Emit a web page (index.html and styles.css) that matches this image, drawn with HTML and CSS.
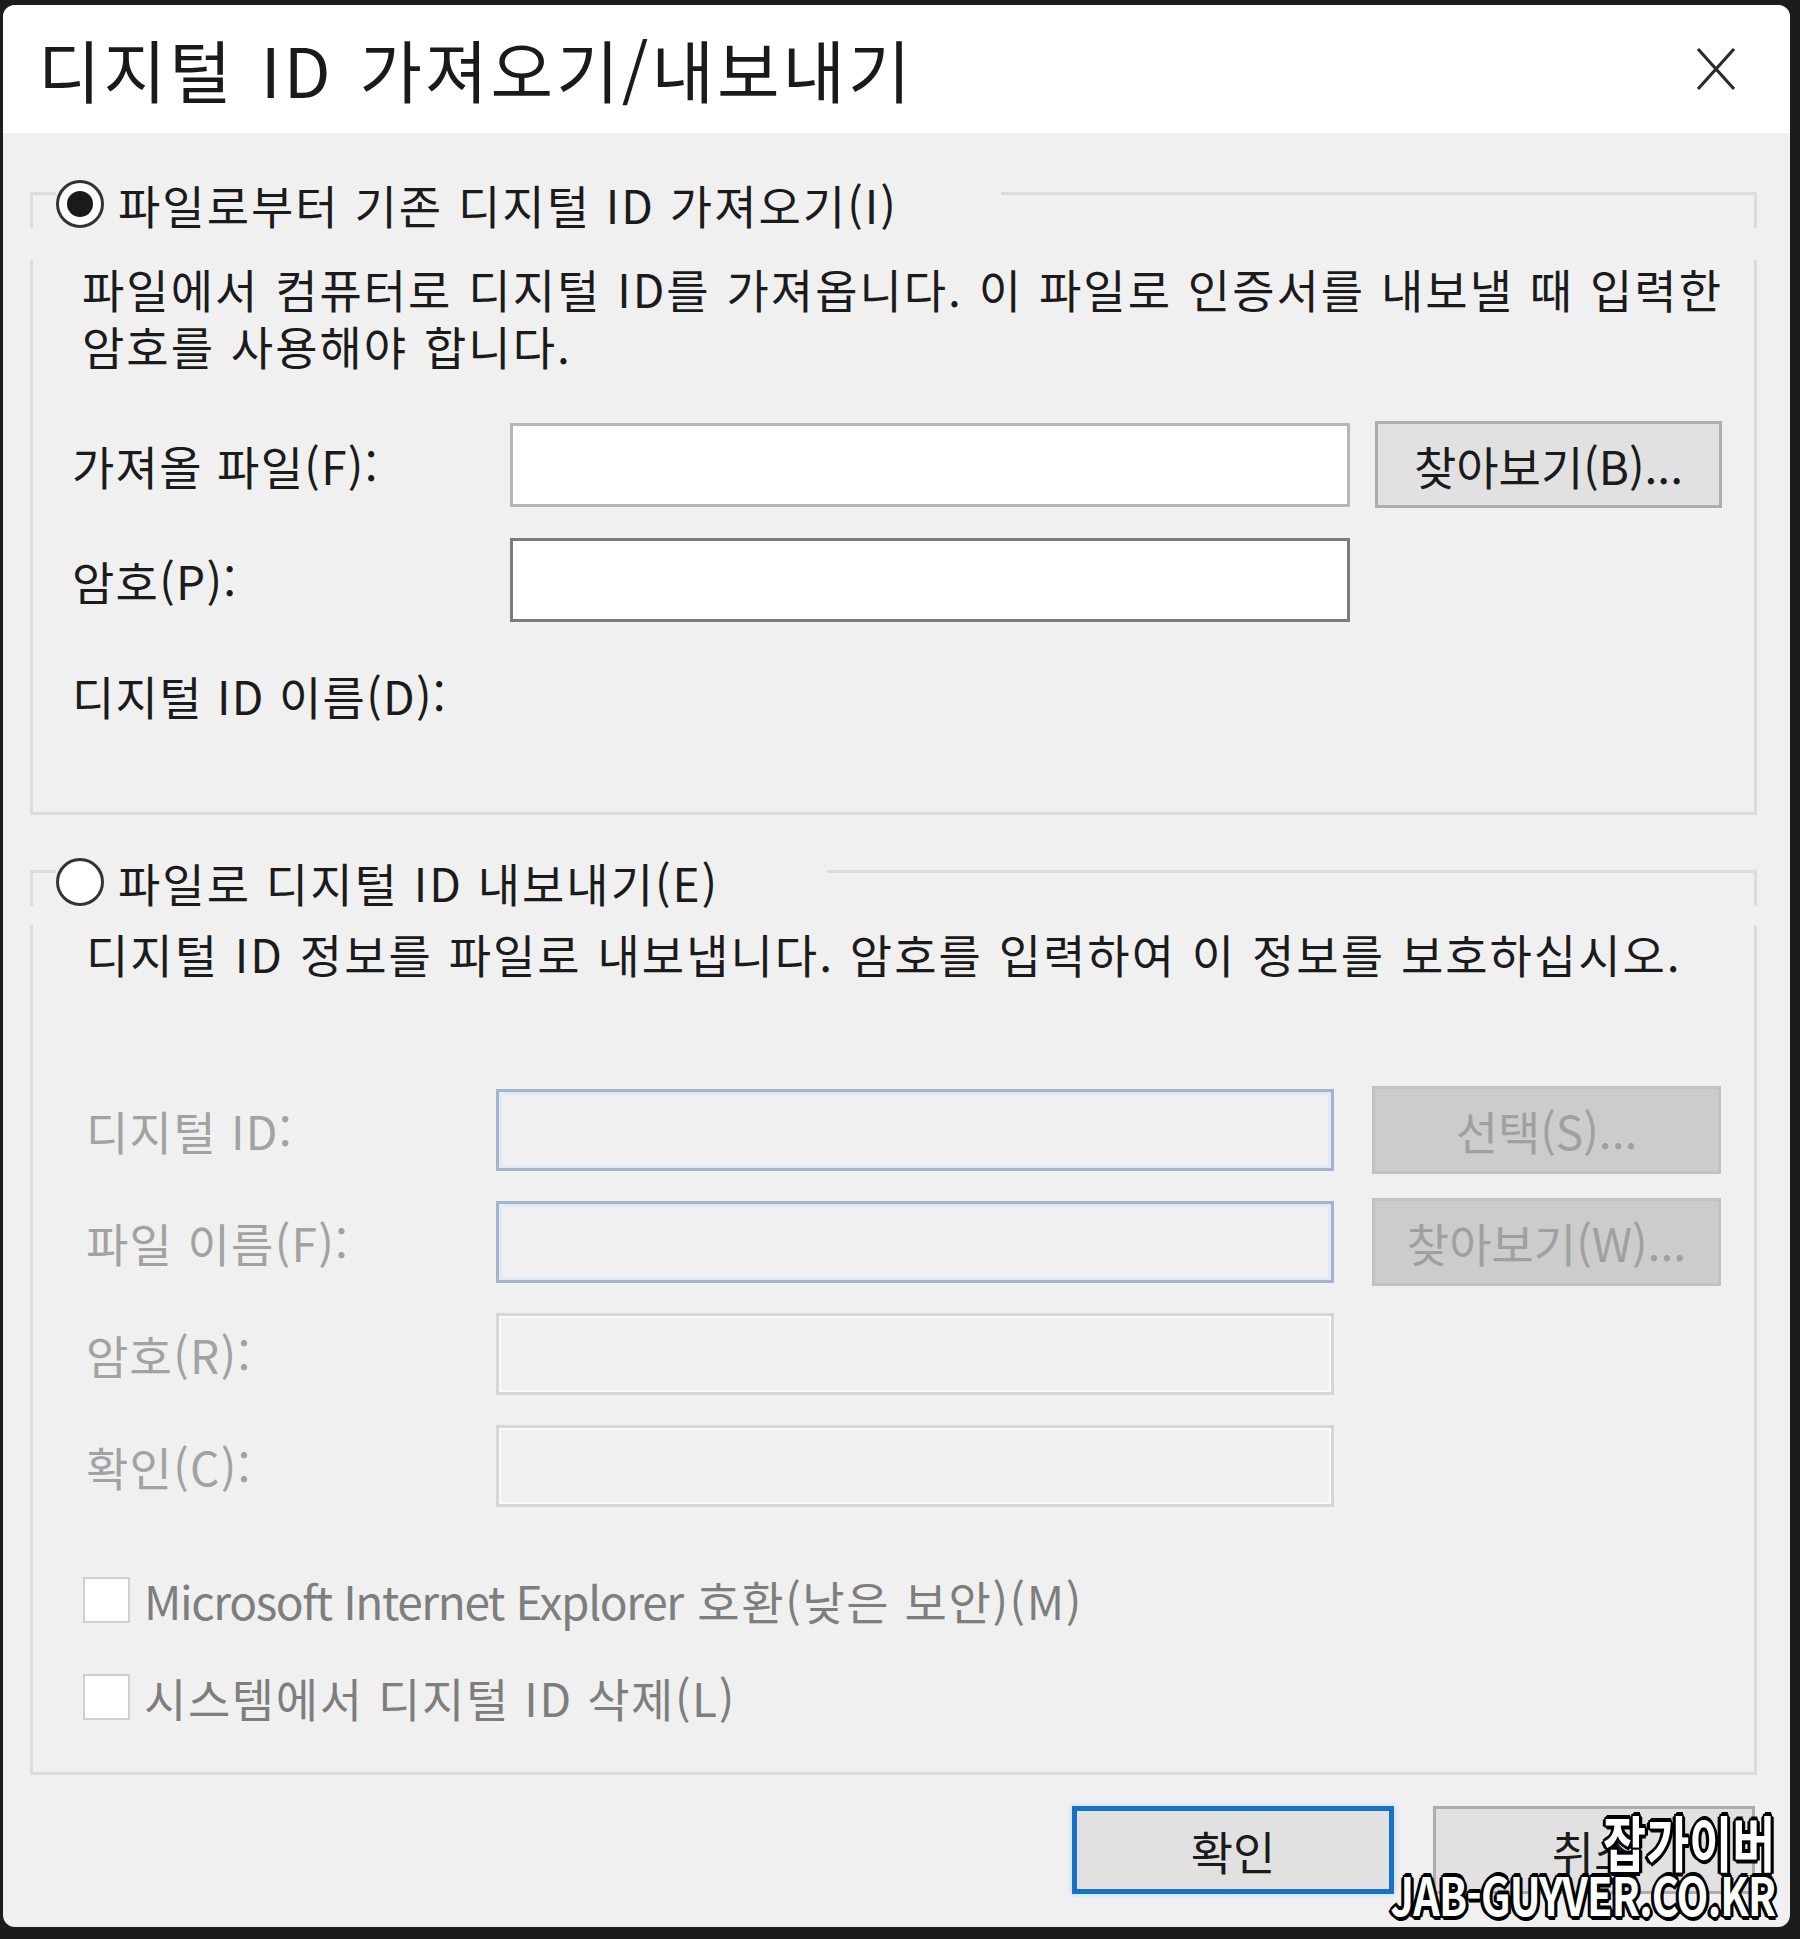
FILE: index.html
```html
<!DOCTYPE html>
<html lang="ko">
<head>
  <meta charset="UTF-8" />
  <meta name="viewport" content="width=device-width, initial-scale=1" />
  <title>디지털 ID 가져오기/내보내기</title>
  <link rel="stylesheet" href="styles.css">
</head>
<body>
  <div class="window">
    <div class="titlebar">
      <h1 class="title">디지털 ID 가져오기/내보내기</h1>
      <button class="close" type="button" aria-label="닫기">
        <svg width="40" height="44" viewBox="0 0 40 44">
          <path d="M2 2 L38 42 M38 2 L2 42" stroke="#2b2b2b" stroke-width="3.2" fill="none" />
        </svg>
      </button>
    </div>

    <div class="content">
      <!-- import group -->
      <section class="group">
        <div class="group-head">
          <span class="seg seg-left"></span>
          <label class="legend legend-import"><span class="radio checked"></span>파일로부터 기존 디지털 ID 가져오기(I)</label>
          <span class="seg seg-right"></span>
        </div>
        <div class="group-body body-import">
          <p class="desc desc-import">파일에서 컴퓨터로 디지털 ID를 가져옵니다. 이 파일로 인증서를 내보낼 때 입력한<br>암호를 사용해야 합니다.</p>
          <div class="form-grid grid-import">
            <span class="label">가져올 파일(F):</span>
            <input class="field" type="text" />
            <button class="btn" type="button">찾아보기(B)...</button>

            <span class="label">암호(P):</span>
            <input class="field field-hover" type="password" />

            <span class="label">디지털 ID 이름(D):</span>
          </div>
        </div>
      </section>

      <!-- export group -->
      <section class="group">
        <div class="group-head">
          <span class="seg seg-left"></span>
          <label class="legend legend-export"><span class="radio"></span>파일로 디지털 ID 내보내기(E)</label>
          <span class="seg seg-right"></span>
        </div>
        <div class="group-body body-export">
          <p class="desc desc-export">디지털 ID 정보를 파일로 내보냅니다. 암호를 입력하여 이 정보를 보호하십시오.</p>
          <div class="form-grid grid-export">
            <span class="label disabled">디지털 ID:</span>
            <input class="field field-off field-blue" type="text" disabled />
            <button class="btn btn-off" type="button" disabled>선택(S)...</button>

            <span class="label disabled">파일 이름(F):</span>
            <input class="field field-off field-blue" type="text" disabled />
            <button class="btn btn-off" type="button" disabled>찾아보기(W)...</button>

            <span class="label disabled">암호(R):</span>
            <input class="field field-off" type="password" disabled />

            <span class="label disabled">확인(C):</span>
            <input class="field field-off" type="password" disabled />
          </div>

          <div class="checks">
            <label class="check"><span class="box"></span><span><span class="latin">Microsoft Internet Explorer</span> 호환(낮은 보안)(M)</span></label>
            <label class="check"><span class="box"></span><span>시스템에서 디지털 ID 삭제(L)</span></label>
          </div>
        </div>
      </section>

      <div class="footer">
        <button class="btn btn-wide btn-default" type="button">확인</button>
        <button class="btn btn-wide" type="button">취소</button>
      </div>
    </div>

    <div class="watermark">
      <div class="wm-kr">잡가이버</div>
      <div class="wm-en">JAB-GUYVER.CO.KR</div>
    </div>
  </div>
</body>
</html>
```

FILE: styles.css
```css
html, body {
  height: 100%;
}
body {
  margin: 0;
  padding: 5px 10px 12px 3px;
  box-sizing: border-box;
  background: #1c1c1c;
  font-family: "Noto Sans CJK KR", "Noto Sans", sans-serif;
  color: #1b1b1b;
}
.window {
  position: relative;
  height: 100%;
  background: #f0f0f0;
  border-radius: 12px;
  overflow: hidden;
}
.titlebar {
  height: 128px;
  background: #fff;
  display: flex;
  align-items: center;
  justify-content: space-between;
  padding: 0 54px 0 35px;
}
.title {
  margin: 0;
  font-size: 68px;
  font-weight: 400;
  line-height: 1;
  letter-spacing: 3px;
  word-spacing: 4px;
  color: #1a1a1a;
}
.close {
  border: 0;
  background: none;
  padding: 0;
  display: flex;
}
.content {
  padding: 0 33px 0 27px;
}
.group {
  margin-top: 47px;
}
.group + .group {
  margin-top: 43px;
}
/* group box header: line, legend, line */
.group-head {
  display: flex;
  height: 48px;
}
.seg {
  margin-top: 12px;
  border-top: 3px solid #dcdcdc;
}
.seg-left {
  width: 23px;
  border-left: 3px solid #dcdcdc;
}
.seg-right {
  flex: 1;
  border-right: 3px solid #dcdcdc;
}
.legend {
  display: flex;
  align-items: center;
  gap: 14px;
  font-size: 46px;
  line-height: 48px;
  letter-spacing: 2px;
  white-space: nowrap;
}
.legend-import {
  width: 945px;
}
.legend-export {
  width: 771px;
}
.radio {
  width: 48px;
  height: 48px;
  box-sizing: border-box;
  border: 3px solid #333;
  border-radius: 50%;
  background: #fff;
  display: flex;
  align-items: center;
  justify-content: center;
  flex-shrink: 0;
}
.radio.checked::after {
  content: "";
  width: 26px;
  height: 26px;
  border-radius: 50%;
  background: #1a1a1a;
}
.group-body {
  border: 3px solid #dcdcdc;
  border-top: 0;
}
.body-import {
  padding: 0 32px 74px 39px;
}
.body-export {
  padding: 0 33px 52px 53px;
}
.desc {
  margin: 0;
  font-size: 46px;
  line-height: 57px;
  letter-spacing: 2px;
  word-spacing: 1px;
  white-space: nowrap;
}
.desc-import {
  margin: 32px 0 0 10px;
}
.desc-export {
  margin-top: 19px;
}
.form-grid {
  display: grid;
  align-items: center;
}
.grid-import {
  margin-top: 47px;
  grid-template-columns: 413px 840px 347px;
  column-gap: 25px;
  grid-auto-rows: 87px;
  row-gap: 28px;
}
.grid-export {
  margin-top: 104px;
  grid-template-columns: 372px 838px 349px;
  column-gap: 38px;
  grid-auto-rows: 88px;
  row-gap: 24px;
}
.label {
  grid-column: 1;
  font-size: 46px;
  letter-spacing: 1.3px;
  white-space: nowrap;
}
.label.disabled {
  color: #a2a2a2;
}
.field {
  height: 84px;
  box-sizing: border-box;
  margin: 0;
  border: 3px solid #b7b7b7;
  background: #fff;
  outline: none;
}
.field-hover {
  border-color: #7c7c7c;
}
.field-off {
  height: 82px;
  background: #f0f0f0;
  border-color: #d6d6d6;
  box-shadow: inset 0 0 0 2px #fafafa;
}
.field-blue {
  border-color: #a2b4cf;
  box-shadow: inset 0 0 0 3px #e2ebf6;
}
.btn {
  height: 87px;
  box-sizing: border-box;
  margin: 0;
  padding: 0;
  border: 3px solid #adadad;
  background: #e1e1e1;
  font-family: inherit;
  font-size: 46px;
  color: #1b1b1b;
}
.btn-off {
  height: 88px;
  background: #cccccc;
  border-color: #c2c2c2;
  color: #a0a0a0;
}
.checks {
  margin-top: 67px;
  margin-left: -3px;
  display: flex;
  flex-direction: column;
  gap: 51px;
}
.check {
  display: flex;
  align-items: center;
  gap: 14px;
  height: 46px;
  font-size: 46px;
  letter-spacing: 1.6px;
  color: #7e7e7e;
  white-space: nowrap;
}
.latin {
  letter-spacing: -1.4px;
}
.box {
  width: 47px;
  height: 46px;
  box-sizing: border-box;
  border: 2px solid #cfcfcf;
  background: #fff;
}
.footer {
  display: flex;
  justify-content: flex-end;
  gap: 39px;
  margin: 31px 2px 0 0;
}
.btn-wide {
  width: 322px;
  height: 88px;
}
.btn-default {
  border: 5px solid #1672c4;
  box-shadow: 0 0 5px 1px #bfe0f7;
}
/* site watermark over the corner */
.watermark {
  position: absolute;
  right: 15px;
  bottom: 8px;
  text-align: right;
  font-weight: 700;
  color: #fff;
  line-height: 52px;
  transform: scaleX(0.78);
  transform-origin: right bottom;
  text-shadow:
    3px 0 0 #000, -3px 0 0 #000, 0 3px 0 #000, 0 -3px 0 #000,
    2px 2px 0 #000, -2px -2px 0 #000, 2px -2px 0 #000, -2px 2px 0 #000,
    4px 1px 0 #000, -4px 1px 0 #000, 1px 4px 0 #000, 1px -4px 0 #000;
}
.wm-kr {
  font-size: 60px;
}
.wm-en {
  font-size: 53px;
  letter-spacing: -1px;
}
```
